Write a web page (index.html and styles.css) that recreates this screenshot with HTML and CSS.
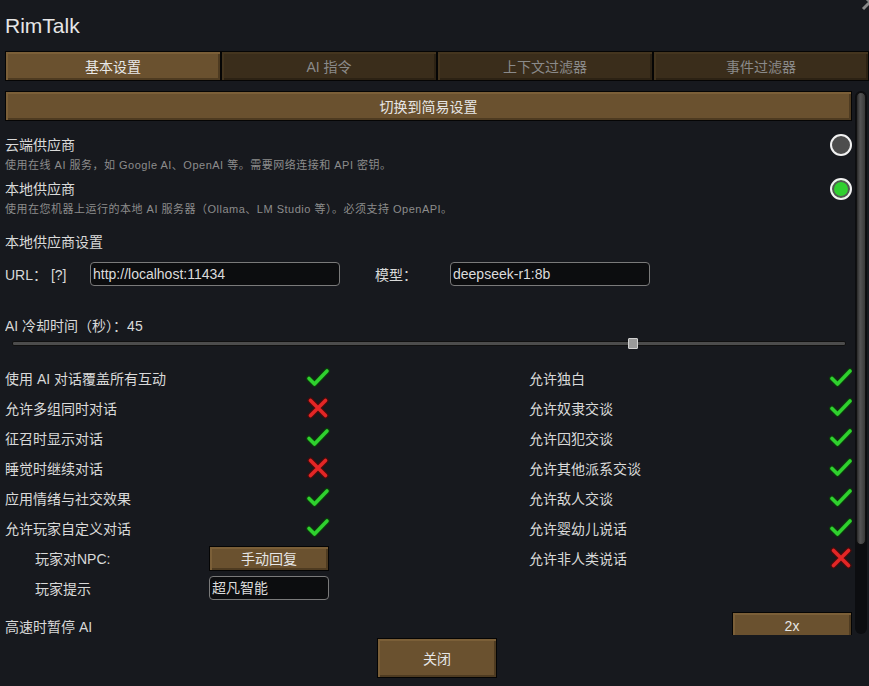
FILE: index.html
```html
<!DOCTYPE html>
<html lang="zh">
<head>
	<meta charset="UTF-8">
	<meta name="viewport" content="width=device-width, initial-scale=1.0">
	<title>RimTalk</title>
	<link rel="stylesheet" href="styles.css">
</head>
<body>

<div class="window">
	<svg class="close-x" width="20" height="20" viewBox="0 0 20 20"><path d="M3 3 L17 17 M17 3 L3 17" stroke="#8a8a8a" stroke-width="3"/></svg>

	<h1 class="title">RimTalk</h1>

	<div class="tabs">
		<div class="tab active">基本设置</div>
		<div class="tab">AI 指令</div>
		<div class="tab">上下文过滤器</div>
		<div class="tab">事件过滤器</div>
	</div>

	<div class="scroll">
		<div class="content">
			<div class="btn btn-wide">切换到简易设置</div>

			<div class="option">
				<div class="option__title">云端供应商</div>
				<span class="radio"></span>
				<div class="option__desc">使用在线 AI 服务，如 Google AI、OpenAI 等。需要网络连接和 API 密钥。</div>
			</div>
			<div class="option">
				<div class="option__title">本地供应商</div>
				<span class="radio radio--on"></span>
				<div class="option__desc">使用在您机器上运行的本地 AI 服务器（Ollama、LM Studio 等）。必须支持 OpenAPI。</div>
			</div>

			<div class="section-label">本地供应商设置</div>
			<div class="url-row">
				<span class="url-label">URL：&nbsp;[?]</span>
				<div class="input input--url">http://localhost:11434</div>
				<span class="model-label">模型：</span>
				<div class="input input--model">deepseek-r1:8b</div>
			</div>

			<div class="section-label cooldown">AI 冷却时间（秒）：45</div>
			<div class="slider">
				<div class="slider__track">
					<span class="slider__thumb" style="left: 74.5%"></span>
				</div>
			</div>

			<div class="checks">
				<div class="check-row"><span>使用 AI 对话覆盖所有互动</span><svg class="icon"><use href="#ok"/></svg></div>
				<div class="check-row"><span>允许独白</span><svg class="icon"><use href="#ok"/></svg></div>

				<div class="check-row"><span>允许多组同时对话</span><svg class="icon"><use href="#no"/></svg></div>
				<div class="check-row"><span>允许奴隶交谈</span><svg class="icon"><use href="#ok"/></svg></div>

				<div class="check-row"><span>征召时显示对话</span><svg class="icon"><use href="#ok"/></svg></div>
				<div class="check-row"><span>允许囚犯交谈</span><svg class="icon"><use href="#ok"/></svg></div>

				<div class="check-row"><span>睡觉时继续对话</span><svg class="icon"><use href="#no"/></svg></div>
				<div class="check-row"><span>允许其他派系交谈</span><svg class="icon"><use href="#ok"/></svg></div>

				<div class="check-row"><span>应用情绪与社交效果</span><svg class="icon"><use href="#ok"/></svg></div>
				<div class="check-row"><span>允许敌人交谈</span><svg class="icon"><use href="#ok"/></svg></div>

				<div class="check-row"><span>允许玩家自定义对话</span><svg class="icon"><use href="#ok"/></svg></div>
				<div class="check-row"><span>允许婴幼儿说话</span><svg class="icon"><use href="#ok"/></svg></div>

				<div class="sub-row"><span>玩家对NPC:</span><div class="btn btn-small">手动回复</div></div>
				<div class="check-row"><span>允许非人类说话</span><svg class="icon"><use href="#no"/></svg></div>

				<div class="sub-row"><span>玩家提示</span><div class="input input--small">超凡智能</div></div>
			</div>

			<div class="speed-row">
				<span>高速时暂停 AI</span>
				<div class="btn btn-speed">2x</div>
			</div>
		</div>
		<div class="scrollbar"><div class="scrollbar__thumb"></div></div>
	</div>

	<div class="footer">
		<div class="btn btn-close">关闭</div>
	</div>
</div>

<svg width="0" height="0" style="position:absolute">
	<defs>
		<symbol id="ok" viewBox="0 0 24 24">
			<path d="M3 12.5 L8.5 18 L21 5" fill="none" stroke="#0c3a0c" stroke-width="6" stroke-linecap="round" stroke-linejoin="round"/>
			<path d="M3 12.5 L8.5 18 L21 5" fill="none" stroke="#2fd02f" stroke-width="3.6" stroke-linecap="round" stroke-linejoin="round"/>
		</symbol>
		<symbol id="no" viewBox="0 0 24 24">
			<path d="M4.5 4.5 L19.5 19.5 M19.5 4.5 L4.5 19.5" fill="none" stroke="#4a0c0c" stroke-width="6" stroke-linecap="round"/>
			<path d="M4.5 4.5 L19.5 19.5 M19.5 4.5 L4.5 19.5" fill="none" stroke="#e32626" stroke-width="3.6" stroke-linecap="round"/>
		</symbol>
	</defs>
</svg>

</body>
</html>
```

FILE: styles.css
```css
* {
    margin: 0;
    padding: 0;
    box-sizing: border-box;
}

body {
    background: #17191e;
    color: #d9d9d9;
    font-family: "Liberation Sans", "Noto Sans CJK SC", sans-serif;
    font-size: 14px;
    overflow: hidden;
}

.window {
    position: relative;
    width: 869px;
    height: 686px;
    padding-left: 5px;
    overflow: hidden;
}

.close-x {
    position: absolute;
    right: -11px;
    top: -8px;
}

.title {
    height: 51px;
    line-height: 51px;
    font-size: 21px;
    font-weight: normal;
    color: #e6e6e6;
}

/* tabs */
.tabs {
    display: grid;
    grid-template-columns: repeat(4, 216px);
    height: 30px;
}

.tab {
    display: flex;
    justify-content: center;
    align-items: center;
    background: #3a2d1b;
    border: 1px solid #050505;
    color: #8a8a8a;
    box-shadow: inset 2px 2px 0 #44351f, inset -2px -2px 0 #2c2214;
}

.tab.active {
    background: #6a512f;
    color: #e8e8e8;
    box-shadow: inset 2px 2px 0 #7b5f38, inset -2px -2px 0 #4e3b21;
}

/* buttons */
.btn {
    display: flex;
    justify-content: center;
    align-items: center;
    background: #6a512f;
    border: 1px solid #050505;
    color: #e6e6e6;
    box-shadow: inset 2px 2px 0 #7b5f38, inset -2px -2px 0 #4e3b21;
}

.btn-wide {
    height: 30px;
}

.btn-small {
    width: 120px;
    height: 25px;
}

.btn-speed {
    width: 120px;
    height: 28px;
}

.btn-close {
    width: 120px;
    height: 40px;
}

/* scroll area */
.scroll {
    display: flex;
    gap: 3px;
    height: 544px;
    margin-top: 10px;
}

.content {
    width: 847px;
    overflow: hidden;
}

.scrollbar {
    width: 12px;
    height: 543px;
    background: #0c0d10;
    border-radius: 6px;
    padding: 1px;
}

.scrollbar__thumb {
    height: 453px;
    border-radius: 5px;
    background: linear-gradient(to right, #2a2a2a, #555 40%, #3a3a3a);
    border: 1px solid #111;
}

/* provider options */
.option {
    display: grid;
    grid-template-columns: 1fr auto;
    margin-top: 13px;
}

.option + .option {
    margin-top: 4px;
}

.option__title {
    line-height: 22px;
}

.option__desc {
    grid-column: 1 / 3;
    line-height: 18px;
    font-size: 11px;
    letter-spacing: 0.5px;
    color: #8c8c8c;
}

.radio {
    align-self: center;
    width: 22px;
    height: 22px;
    border-radius: 50%;
    border: 2px solid #f2f2f2;
    background: #4d4d4d;
}

.radio--on {
    background: #2fd02f;
    box-shadow: inset 0 0 0 2px #555;
}

.section-label {
    margin-top: 13px;
    line-height: 22px;
}

.cooldown {
    margin-top: 29px;
}

/* url row */
.url-row {
    display: flex;
    align-items: center;
    height: 24px;
    margin-top: 9px;
}

.url-label {
    width: 85px;
}

.model-label {
    width: 75px;
    margin-left: 35px;
}

.input {
    height: 24px;
    line-height: 22px;
    padding-left: 2px;
    background: #0c0d0f;
    border: 1px solid #7a7a7a;
    border-radius: 4px;
    color: #dcdcdc;
}

.input--url {
    width: 250px;
}

.input--model {
    width: 200px;
}

.input--small {
    width: 120px;
}

/* slider */
.slider {
    height: 12px;
    padding: 4px 6px 0 7px;
}

.slider__track {
    position: relative;
    height: 5px;
    background: #4c4c4c;
    border: 1px solid #101010;
    border-radius: 2px;
}

.slider__thumb {
    position: absolute;
    top: -4px;
    width: 10px;
    height: 11px;
    margin-left: -5px;
    background: #9a9a9a;
    border: 1px solid #d0d0d0;
    border-radius: 1px;
}

/* check rows */
.checks {
    display: grid;
    grid-template-columns: 324px 323px;
    justify-content: space-between;
    grid-auto-rows: 30px;
    margin-top: 14px;
}

.check-row,
.sub-row {
    display: flex;
    justify-content: space-between;
    align-items: center;
}

.sub-row {
    padding-left: 30px;
}

.icon {
    width: 24px;
    height: 24px;
    margin-right: -1px;
}

.speed-row {
    display: flex;
    justify-content: space-between;
    align-items: center;
    height: 30px;
    margin-top: 8px;
}

/* footer */
.footer {
    display: flex;
    justify-content: center;
    margin-top: 3px;
}
```
